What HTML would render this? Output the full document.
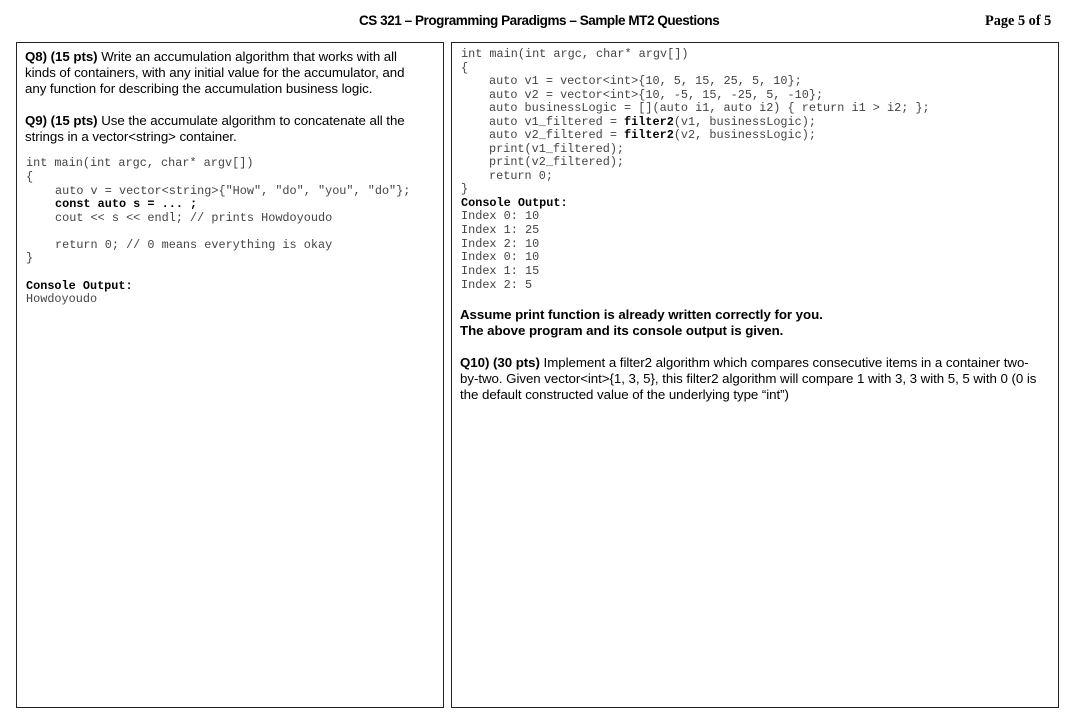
<!DOCTYPE html>
<html><head><meta charset="utf-8"><style>
body{margin:0;width:1074px;height:727px;background:#fff;position:relative;overflow:hidden;font-family:"Liberation Sans",sans-serif;color:#000}
.a{position:absolute;white-space:pre}
.box{position:absolute;border:1px solid #222;box-sizing:border-box}
.p{font-size:13.3px;letter-spacing:-0.05px}
.m{font-family:"Liberation Mono",monospace;font-size:11.85px;color:#444}
.mb{font-family:"Liberation Mono",monospace;font-size:11.85px;color:#000;font-weight:bold}
b{font-weight:bold;color:#000}
</style></head><body>
<div class="a" style="left:359px;top:13px;font-size:13.5px;font-weight:bold;letter-spacing:-0.45px">CS 321 – Programming Paradigms – Sample MT2 Questions</div>
<div class="a" style="left:985px;top:13px;font-family:'Liberation Serif',serif;font-size:14.3px;font-weight:bold">Page 5 of 5</div>
<div class="box" style="left:16px;top:42px;width:428px;height:666px"></div>
<div class="box" style="left:451px;top:42px;width:608px;height:666px"></div>

<div class="a p" style="left:25px;top:49px"><b>Q8) (15 pts)</b> Write an accumulation algorithm that works with all</div>
<div class="a p" style="left:25px;top:65px">kinds of containers, with any initial value for the accumulator, and</div>
<div class="a p" style="left:25px;top:81px">any function for describing the accumulation business logic.</div>
<div class="a p" style="left:25px;top:113px"><b>Q9) (15 pts)</b> Use the accumulate algorithm to concatenate all the</div>
<div class="a p" style="left:25px;top:129px">strings in a vector&lt;string&gt; container.</div>

<div class="a m" style="left:26px;top:156px">int main(int argc, char* argv[])</div>
<div class="a m" style="left:26px;top:170px">{</div>
<div class="a m" style="left:55px;top:184px">auto v = vector&lt;string&gt;{"How", "do", "you", "do"};</div>
<div class="a mb" style="left:55px;top:197px">const auto s = ... ;</div>
<div class="a m" style="left:55px;top:211px">cout &lt;&lt; s &lt;&lt; endl; // prints Howdoyoudo</div>
<div class="a m" style="left:55px;top:238px">return 0; // 0 means everything is okay</div>
<div class="a m" style="left:26px;top:251px">}</div>
<div class="a mb" style="left:26px;top:279px">Console Output:</div>
<div class="a m" style="left:26px;top:292px">Howdoyoudo</div>

<div class="a m" style="left:461px;top:47px">int main(int argc, char* argv[])</div>
<div class="a m" style="left:461px;top:61px">{</div>
<div class="a m" style="left:489px;top:74px">auto v1 = vector&lt;int&gt;{10, 5, 15, 25, 5, 10};</div>
<div class="a m" style="left:489px;top:88px">auto v2 = vector&lt;int&gt;{10, -5, 15, -25, 5, -10};</div>
<div class="a m" style="left:489px;top:101px">auto businessLogic = [](auto i1, auto i2) { return i1 &gt; i2; };</div>
<div class="a m" style="left:489px;top:115px">auto v1_filtered = <b>filter2</b>(v1, businessLogic);</div>
<div class="a m" style="left:489px;top:128px">auto v2_filtered = <b>filter2</b>(v2, businessLogic);</div>
<div class="a m" style="left:489px;top:142px">print(v1_filtered);</div>
<div class="a m" style="left:489px;top:155px">print(v2_filtered);</div>
<div class="a m" style="left:489px;top:169px">return 0;</div>
<div class="a m" style="left:461px;top:182px">}</div>
<div class="a mb" style="left:461px;top:196px">Console Output:</div>
<div class="a m" style="left:461px;top:209px">Index 0: 10</div>
<div class="a m" style="left:461px;top:223px">Index 1: 25</div>
<div class="a m" style="left:461px;top:237px">Index 2: 10</div>
<div class="a m" style="left:461px;top:250px">Index 0: 10</div>
<div class="a m" style="left:461px;top:264px">Index 1: 15</div>
<div class="a m" style="left:461px;top:278px">Index 2: 5</div>

<div class="a p" style="left:460px;top:307px;font-weight:bold">Assume print function is already written correctly for you.</div>
<div class="a p" style="left:460px;top:323px;font-weight:bold">The above program and its console output is given.</div>
<div class="a p" style="left:460px;top:355px"><b>Q10) (30 pts)</b> Implement a filter2 algorithm which compares consecutive items in a container two-</div>
<div class="a p" style="left:460px;top:371px">by-two. Given vector&lt;int&gt;{1, 3, 5}, this filter2 algorithm will compare 1 with 3, 3 with 5, 5 with 0 (0 is</div>
<div class="a p" style="left:460px;top:387px">the default constructed value of the underlying type “int”)</div>
</body></html>
